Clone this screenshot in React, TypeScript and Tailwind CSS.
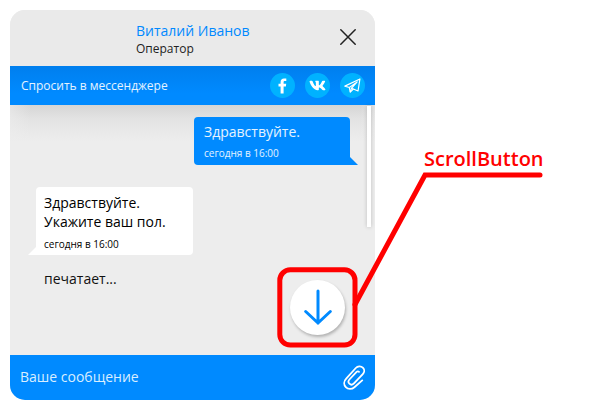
import React from "react";
import { FaVk } from "react-icons/fa";

function CloseIcon() {
  return (
    <svg width="16" height="16" viewBox="0 0 16 16" fill="none" stroke="#222" strokeWidth="1.5" strokeLinecap="round">
      <path d="M0.8 0.8 15.2 15.2M15.2 0.8 0.8 15.2" />
    </svg>
  );
}

function FacebookIcon() {
  return (
    <svg width="9" height="16" viewBox="0 0 9 16" fill="#fff">
      <path d="M8.3 0.5V3.1H6.7C5.9 3.1 5.6 3.5 5.6 4.3V5.8H8.2L7.9 8.4H5.6V15.5H2.6V8.4H0.5V5.8H2.6V4C2.6 1.7 3.9 0.5 6 0.5Z" />
    </svg>
  );
}

function TelegramIcon() {
  return (
    <svg width="17" height="15" viewBox="0 0 16 14" fill="none" stroke="#fff" strokeWidth="1.1" strokeLinejoin="round">
      <path d="M0.8 7.6 15 0.8 13.2 12.2 8.8 10.3 5.9 13.2 5 8.9Z" />
      <path d="M5 8.9 12.4 3.6 7 9.6 5.9 13.2M7 9.6 8.8 10.3" />
    </svg>
  );
}

function ClipIcon() {
  return (
    <svg width="22" height="25" viewBox="0 0 22 25" fill="none" stroke="#fff" strokeWidth="1.8" strokeLinecap="round" strokeLinejoin="round">
      <path d="M19.2 15.4 11.4 22.2C8.7 24.6 5 24.5 2.8 22.1 0.6 19.7 0.7 16.3 3 13.9L12.8 3C14.7 0.9 17.9 0.7 19.8 2.6 21.7 4.5 21.6 7.3 19.8 9.2L10.7 18.6C9.5 19.8 7.6 19.9 6.4 18.7 5.2 17.5 5.2 15.8 6.4 14.5L13.6 6.9C14.3 6.2 15.4 6.2 16 6.9" />
    </svg>
  );
}

function Social({ children }: { children: React.ReactNode }) {
  return (
    <button className="flex size-[25px] items-center justify-center rounded-full bg-[#00b2ff] text-white">
      {children}
    </button>
  );
}

export default function App() {
  return (
    <div className="relative h-[410px] w-[600px] overflow-hidden bg-white p-[10px] font-['Open_Sans','Noto_Sans',sans-serif]">
      <div className="flex h-[390px] w-[365px] flex-col overflow-hidden rounded-[15px] bg-[#ededed]">
        <header className="flex h-14 shrink-0 items-start justify-between bg-[#eaeaea] pl-[126px] pr-[19px]">
          <div className="pt-[11px]">
            <div className="text-[14px] leading-[19px] text-[#0089ff]">Виталий Иванов</div>
            <div className="mt-px text-[12px] leading-[16px] text-[#222]">Оператор</div>
          </div>
          <button className="mt-[19px]"><CloseIcon /></button>
        </header>

        <div className="flex h-[39px] shrink-0 items-center justify-between bg-gradient-to-b from-[#007fee] to-[#008aff] to-70% pl-[11px] pr-[10px]">
          <span className="text-[12px] text-white/90">Спросить в мессенджере</span>
          <div className="flex gap-[10px]">
            <Social><FacebookIcon /></Social>
            <Social><FaVk size={17} /></Social>
            <Social><TelegramIcon /></Social>
          </div>
        </div>

        <main className="flex h-[250px] shrink-0 bg-[linear-gradient(to_right,#ededed99_0px,#ededed00_20px,#ededed00_350px,#ededed99_365px),linear-gradient(to_bottom,#d5d5d5_0px,#e3e3e3_14px,#ededed_36px)]">
          <div className="flex w-[340px] flex-col pt-3">
            <div className="relative h-[47.5px] w-[156.5px] self-end rounded-[4px] bg-[#008aff] pl-[10.5px] pt-[5px] text-white/90">
              <div className="text-[14px] leading-[20px]">Здравствуйте.</div>
              <div className="mt-[4px] text-[10px] leading-[14px]">сегодня в 16:00</div>
              <svg className="absolute bottom-0 left-[149.5px]" width="15" height="8"><path d="M0 0H7L15 8H0Z" fill="#008aff" /></svg>
            </div>
            <div className="relative ml-[26px] mt-[22.5px] h-[68px] w-[157px] rounded-[4px] bg-white pl-2 pt-[6px] text-black">
              <div className="text-[14px] leading-[19px]">Здравствуйте.<br />Укажите ваш пол.</div>
              <div className="mt-[6px] text-[10px] leading-[14px]">сегодня в 16:00</div>
              <svg className="absolute bottom-0 -left-2" width="15" height="8"><path d="M8 0H15V8H0Z" fill="#fff" /></svg>
            </div>
            <div className="ml-[34px] mt-[14px] text-[14px] leading-[20px] text-[#111]">печатает...</div>
          </div>
          <div className="ml-[17px] mt-px h-[121px] w-[4px] bg-white shadow-[0_0_4px_rgba(0,0,0,0.2)]" />
        </main>

        <footer className="flex h-[45px] shrink-0 items-center justify-between bg-[#008aff] pl-[10px] pr-[10px]">
          <span className="pb-[2px] text-[14px] text-[#d9eeff]">Ваше сообщение</span>
          <button><ClipIcon /></button>
        </footer>
      </div>

      <button className="absolute left-[290px] top-[280px] flex size-[55px] items-center justify-center rounded-full bg-white shadow-[1px_2px_3px_rgba(0,0,0,0.25)]">
        <svg width="28" height="37" viewBox="0 0 28 37" fill="none" stroke="#008aff" strokeWidth="3" strokeLinecap="round" strokeLinejoin="miter">
          <path d="M14 2V34M1.7 22.5 14 34 26.3 22.5" />
        </svg>
      </button>
      <svg className="absolute left-0 top-0" width="600" height="410" fill="none" stroke="#f00" strokeWidth="5" strokeLinecap="round" strokeLinejoin="miter">
        <rect x="279.8" y="269.8" width="75.2" height="75.2" rx="10.5" />
        <path d="M355 304.5 425 175H540" />
      </svg>
      <div className="absolute left-[424px] top-[146px] text-[20px] font-semibold leading-[26px] text-[#f00]">ScrollButton</div>
    </div>
  );
}
